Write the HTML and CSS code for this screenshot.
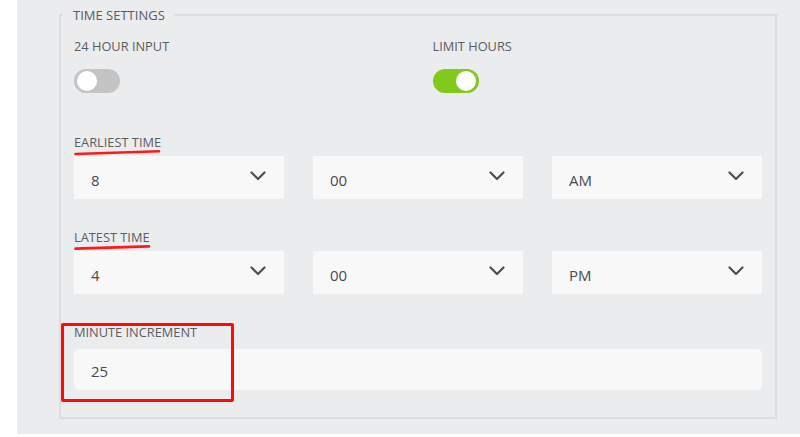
FILE: index.html
```html
<!DOCTYPE html>
<html>
<head>
<meta charset="utf-8">
<link rel="stylesheet" href="styles.css">
</head>
<body>
<div class="panel">
  <fieldset class="settings">
    <legend class="legend">TIME SETTINGS</legend>
    <div class="toggles">
      <div class="toggle-field">
        <div class="label">24 HOUR INPUT</div>
        <div class="toggle"><span class="knob"></span></div>
      </div>
      <div class="toggle-field">
        <div class="label">LIMIT HOURS</div>
        <div class="toggle on"><span class="knob"></span></div>
      </div>
    </div>

    <div class="time-block first">
      <div class="label annotated">EARLIEST TIME
        <svg class="underline" width="90" height="7" viewBox="0 0 90 7"><path d="M1.5 5 Q 40 3.6 85 2.2" /></svg>
      </div>
      <div class="selects">
        <div class="select"><span>8</span><svg class="chev" width="16" height="10" viewBox="0 0 16 10"><path d="M1.5 1.5 L8 8 L14.5 1.5"/></svg></div>
        <div class="select"><span>00</span><svg class="chev" width="16" height="10" viewBox="0 0 16 10"><path d="M1.5 1.5 L8 8 L14.5 1.5"/></svg></div>
        <div class="select"><span>AM</span><svg class="chev" width="16" height="10" viewBox="0 0 16 10"><path d="M1.5 1.5 L8 8 L14.5 1.5"/></svg></div>
      </div>
    </div>

    <div class="time-block">
      <div class="label annotated">LATEST TIME
        <svg class="underline" width="80" height="7" viewBox="0 0 80 7"><path d="M1.5 4.6 Q 35 3.6 75 2.4" /></svg>
      </div>
      <div class="selects">
        <div class="select"><span>4</span><svg class="chev" width="16" height="10" viewBox="0 0 16 10"><path d="M1.5 1.5 L8 8 L14.5 1.5"/></svg></div>
        <div class="select"><span>00</span><svg class="chev" width="16" height="10" viewBox="0 0 16 10"><path d="M1.5 1.5 L8 8 L14.5 1.5"/></svg></div>
        <div class="select"><span>PM</span><svg class="chev" width="16" height="10" viewBox="0 0 16 10"><path d="M1.5 1.5 L8 8 L14.5 1.5"/></svg></div>
      </div>
    </div>

    <div class="minute-block">
      <div class="label">MINUTE INCREMENT</div>
      <div class="input">25</div>
      <div class="highlight"></div>
    </div>
  </fieldset>
</div>
</body>
</html>
```

FILE: styles.css
```css
html, body {
  margin: 0;
  padding: 0;
  background: #ffffff;
}

body {
  font-family: "Open Sans", "Noto Sans", sans-serif;
  width: 800px;
  height: 437px;
  overflow: hidden;
}

.panel {
  margin-left: 17px;
  height: 434px;
  background: #ebecee;
  padding-top: 7px;
  box-sizing: border-box;
}

.settings {
  margin: 0 0 0 42px;
  width: 718px;
  box-sizing: border-box;
  border: 2px solid #dcdddf;
  padding: 15px 13px 27px 13px;
  min-width: 0;
}

.legend {
  margin-left: -11px;
  padding: 0 10px;
  font-size: 13px;
  line-height: 16px;
  color: #595a5c;
}

.label {
  font-size: 12.8px;
  line-height: 16px;
  color: #5b5c5e;
  letter-spacing: 0;
}

.toggles {
  display: grid;
  grid-template-columns: 1fr 1fr;
  column-gap: 29px;
}

.toggle {
  margin-top: 15px;
  width: 46px;
  height: 24px;
  border-radius: 12px;
  background: #c4c4c4;
  position: relative;
}

.toggle.on {
  background: #82c91e;
}

.knob {
  position: absolute;
  top: 2px;
  left: 3px;
  width: 20px;
  height: 20px;
  border-radius: 50%;
  background: #ffffff;
}

.toggle.on .knob {
  left: 23px;
}

.time-block {
  margin-top: 30px;
}

.time-block.first {
  margin-top: 41px;
}

.annotated {
  position: relative;
}

.underline {
  position: absolute;
  left: 0;
  top: 15px;
  overflow: visible;
}

.underline path {
  fill: none;
  stroke: #ff1a1a;
  stroke-width: 2.6;
  stroke-linecap: round;
}

.selects {
  margin-top: 6px;
  display: grid;
  grid-template-columns: repeat(3, 1fr);
  column-gap: 29px;
}

.select {
  height: 43px;
  background: #f8f8f8;
  border-radius: 1px;
  display: flex;
  align-items: center;
  justify-content: space-between;
  padding: 0 18px 0 17px;
  font-size: 15px;
  color: #4a4b4d;
}

.select span {
  padding-top: 4px;
}

.chev {
  margin-top: -3px;
}

.chev path {
  fill: none;
  stroke: #4d4e50;
  stroke-width: 2.2;
  stroke-linecap: round;
  stroke-linejoin: round;
}

.minute-block {
  margin-top: 30px;
  position: relative;
}

.input {
  margin-top: 9px;
  height: 41px;
  background: #f8f8f8;
  border-radius: 5px;
  display: flex;
  align-items: center;
  padding: 2px 17px 0 17px;
  box-sizing: border-box;
  font-size: 15px;
  color: #4a4b4d;
}

.highlight {
  position: absolute;
  left: -13px;
  top: -1px;
  width: 173px;
  height: 79px;
  box-sizing: border-box;
  border: 3px solid #ff0a0a;
  border-radius: 2px;
}
```
